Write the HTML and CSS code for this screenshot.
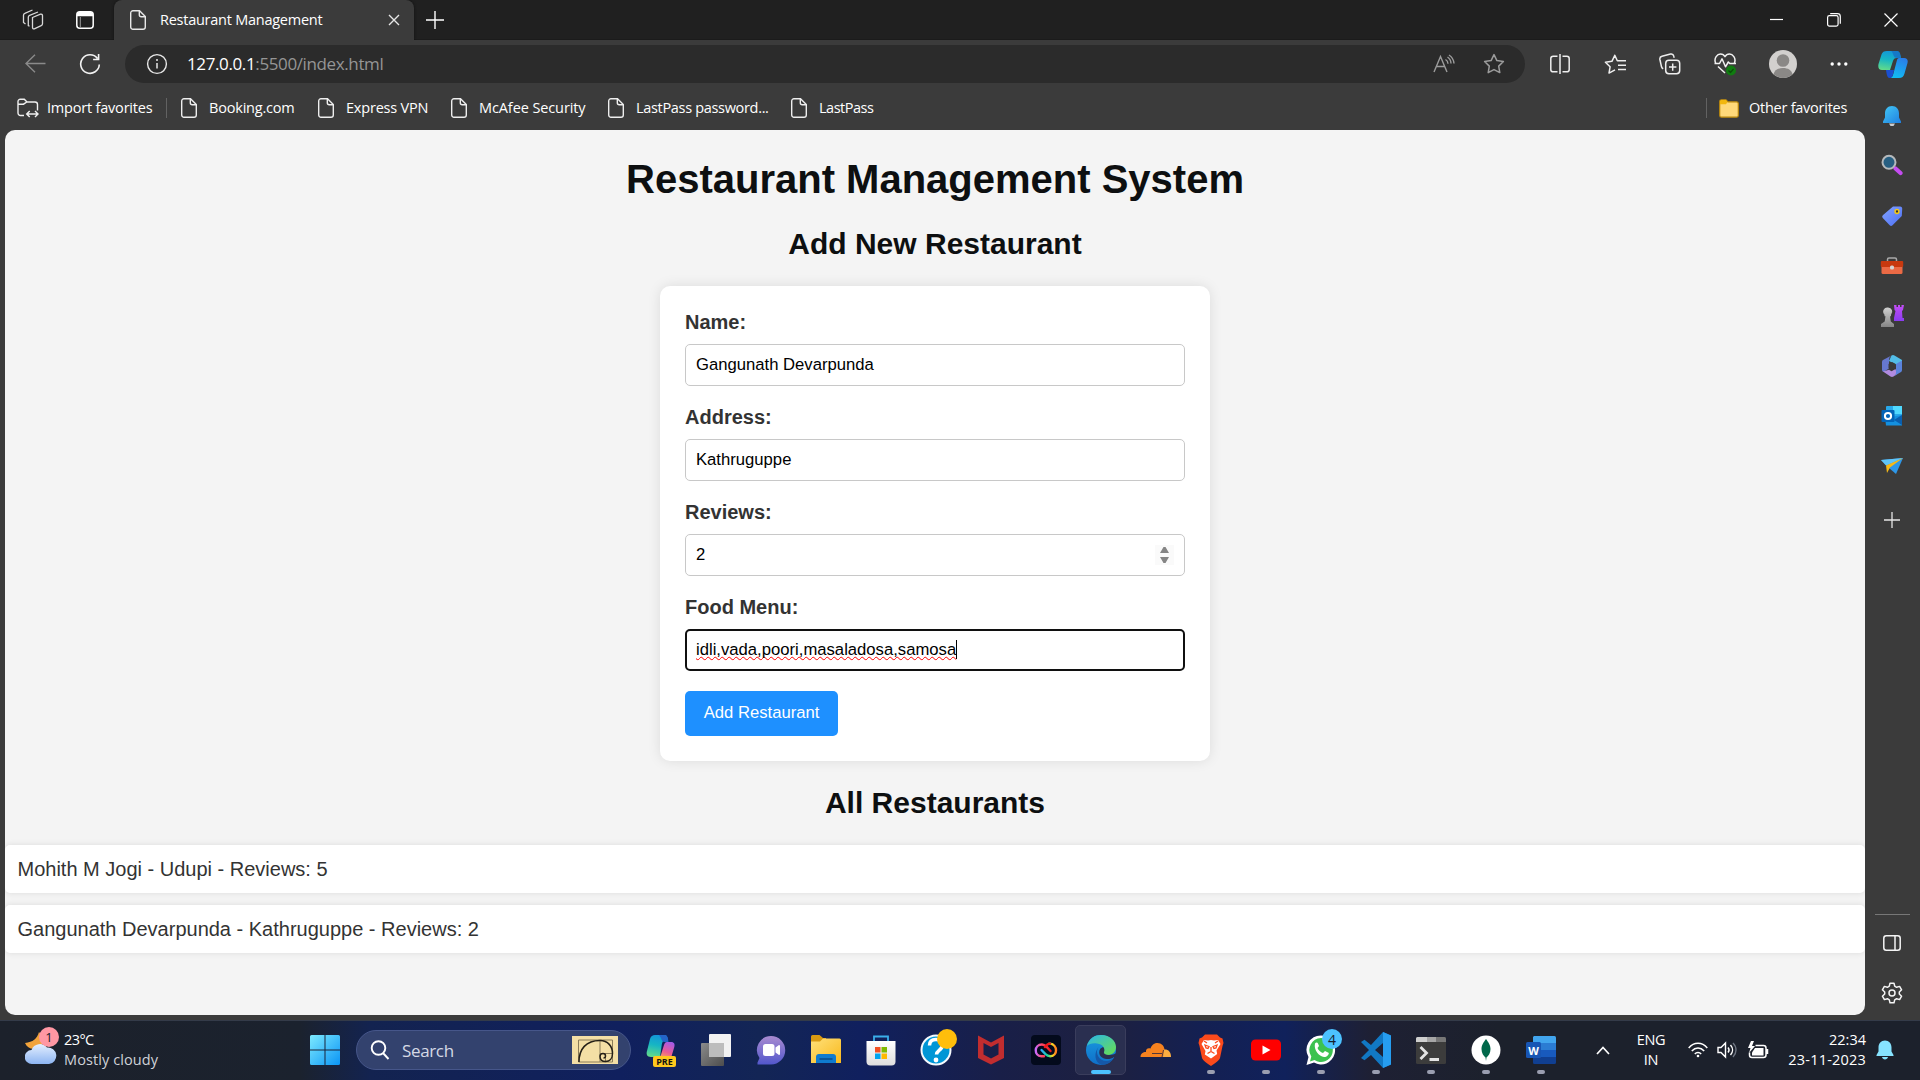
FILE: index.html
```html
<!DOCTYPE html>
<html lang="en">
<head>
<meta charset="utf-8">
<title>Restaurant Management</title>
<link rel="stylesheet" href="styles.css">
</head>
<body>
<svg class="defs" width="0" height="0">
  <defs>
    <symbol id="page" viewBox="0 0 16 20"><path d="M3 .7h6.500L15.300 6.500V17a2.300 2.300 0 0 1-2.300 2.300H3A2.300 2.300 0 0 1 .7 17V3A2.300 2.300 0 0 1 3 .7zM9.300 1v3.700a2 2 0 0 0 2 2H15" fill="none" stroke="currentColor" stroke-width="1.400"/></symbol>
    <linearGradient id="gBell" x2="1" y2="1"><stop offset="0" stop-color="#43c8f5"/><stop offset="1" stop-color="#1f7fe0"/></linearGradient>
    <linearGradient id="gTeal" x1="0.500" y1="0" x2="0.300" y2="1"><stop offset="0" stop-color="#1396d8"/><stop offset=".45" stop-color="#16b5c4"/><stop offset="1" stop-color="#62db8a"/></linearGradient>
    <linearGradient id="gBlue" x1="0.700" y1="0" x2="0.300" y2="1"><stop offset="0" stop-color="#2a7de8"/><stop offset="1" stop-color="#11bdf3"/></linearGradient>
    <linearGradient id="gPink" x1="0.700" y1="0" x2="0.300" y2="1"><stop offset="0" stop-color="#a45be8"/><stop offset=".6" stop-color="#ec5a95"/><stop offset="1" stop-color="#f7a35c"/></linearGradient>
    <linearGradient id="gTag" x2="1" y2="1"><stop offset="0" stop-color="#84a4ff"/><stop offset="1" stop-color="#4c6ff5"/></linearGradient>
    <linearGradient id="gRook" y2="1" x2="0"><stop offset="0" stop-color="#c34df5"/><stop offset="1" stop-color="#8a3df0"/></linearGradient>
    <linearGradient id="gPawn" y2="1" x2="0"><stop offset="0" stop-color="#d0d0d0"/><stop offset="1" stop-color="#858585"/></linearGradient>
    <linearGradient id="gWin" x2="1" y2="1"><stop offset="0" stop-color="#7deaff"/><stop offset="1" stop-color="#0a94f5"/></linearGradient>
    <linearGradient id="gFolder" x2="1" y2="1"><stop offset="0" stop-color="#ffe07a"/><stop offset="1" stop-color="#f9b91c"/></linearGradient>
    <linearGradient id="gChat" x2="0" y2="1"><stop offset="0" stop-color="#a98bd0"/><stop offset="1" stop-color="#5257cc"/></linearGradient>
    <linearGradient id="gEdge" x2="0" y2="1"><stop offset="0" stop-color="#1a9be0"/><stop offset="1" stop-color="#0f6fc8"/></linearGradient>
    <linearGradient id="gWave" x2="1" y2="1"><stop offset="0" stop-color="#2bb5ea"/><stop offset="1" stop-color="#6be04c"/></linearGradient>
    <linearGradient id="gCloud" x2="0" y2="1"><stop offset="0" stop-color="#e4efff"/><stop offset="1" stop-color="#8db5f2"/></linearGradient>
    <linearGradient id="gBox" x2="0" y2="1"><stop offset="0" stop-color="#fff"/><stop offset="1" stop-color="#dedede"/></linearGradient>
    <linearGradient id="gGrey" x2="1" y2="1"><stop offset="0" stop-color="#8b8b8b"/><stop offset="1" stop-color="#4d4d4d"/></linearGradient>
    <linearGradient id="gLoopA" x2="1" y2="0"><stop offset="0" stop-color="#c86bff"/><stop offset=".4" stop-color="#ff4a6a"/><stop offset="1" stop-color="#f01818"/></linearGradient>
    <linearGradient id="gLoopB" x2="1" y2="0"><stop offset="0" stop-color="#2aa8ff"/><stop offset=".45" stop-color="#20d890"/><stop offset=".75" stop-color="#ffd820"/><stop offset="1" stop-color="#ff7a20"/></linearGradient>
  </defs>
</svg>

<header class="tabstrip">
  <span class="cell workspaces"><svg width="22" height="22" viewBox="0 0 22 22" fill="none" stroke="#d8d8d8" stroke-width="1.300"><path d="M10.500 8.500l8-3.300a1.500 1.500 0 0 1 2 1.400v8.100a2 2 0 0 1-1.300 1.900l-6.900 3.200a1.300 1.300 0 0 1-1.800-1.200z"/><path d="M7.500 17.300L6.300 16.600V8.200a2 2 0 0 1 1.300-1.900l8.400-3.300M3.500 15l-2-1.500V6.200a2 2 0 0 1 1.300-1.900L10.500 1"/></svg></span>
  <span class="cell tab-actions"><svg width="18" height="18" viewBox="0 0 18 18"><rect x=".8" y=".8" width="16.400" height="16.400" rx="3" fill="none" stroke="#fff" stroke-width="1.500"/><path d="M1 5.300V3.500A2.500 2.500 0 0 1 3.500 1h11A2.500 2.500 0 0 1 17 3.500v1.800z" fill="#fff"/><path d="M4.300 6v11" stroke="#9a9a9a" stroke-width="1"/></svg></span>
  <div class="tab">
    <svg width="16" height="20"><use href="#page"/></svg>
    <span class="tab-title">Restaurant Management</span>
    <svg class="tab-close" width="12" height="12" viewBox="0 0 12 12" stroke="#e6e6e6" stroke-width="1.400"><path d="M1 1l10 10M11 1L1 11"/></svg>
  </div>
  <span class="cell new-tab"><svg width="18" height="18" viewBox="0 0 18 18" stroke="#fff" stroke-width="1.400"><path d="M9 0v18M0 9h18"/></svg></span>
  <div class="window-buttons">
    <span class="cell"><svg width="14" height="14" viewBox="0 0 14 14" stroke="#fff" stroke-width="1.200"><path d="M0 6.500h13"/></svg></span>
    <span class="cell"><svg width="14" height="14" viewBox="0 0 14 14" fill="none" stroke="#fff" stroke-width="1.200"><rect x=".6" y="2.600" width="10.500" height="10.500" rx="1.800"/><path d="M3.200.6h7.300a2.800 2.800 0 0 1 2.800 2.800v7.300"/></svg></span>
    <span class="cell"><svg width="14" height="14" viewBox="0 0 14 14" stroke="#fff" stroke-width="1.200"><path d="M.5.5l13 13M13.500.5l-13 13"/></svg></span>
  </div>
</header>

<div class="browser">
  <div class="main-column">
    <nav class="toolbar">
      <span class="cell back"><svg width="21" height="19" viewBox="0 0 21 19" fill="none" stroke="#8a8a8a" stroke-width="1.400"><path d="M20.500 9.500H1M10 .8L1 9.500l9 8.700"/></svg></span>
      <span class="cell reload"><svg width="22" height="22" viewBox="0 0 22 22" fill="none" stroke="#f2f2f2" stroke-width="1.600"><path d="M20.300 11.500A9.300 9.300 0 1 1 18.500 5.500M19.600 1v5.500h-5.500"/></svg></span>
      <div class="address">
        <span class="cell"><svg width="22" height="22" viewBox="0 0 22 22"><circle cx="11" cy="11" r="9.400" fill="none" stroke="#e8e8e8" stroke-width="1.400"/><path d="M11 10v5.500" stroke="#e8e8e8" stroke-width="1.500"/><circle cx="11" cy="7" r="1" fill="#e8e8e8"/></svg></span>
        <span class="url"><b>127.0.0.1</b>:5500/index.html</span>
        <span class="cell"><svg width="22" height="20" viewBox="0 0 22 20" fill="none" stroke="#9c9c9c" stroke-width="1.400"><path d="M1 18L7.500 2.500 14 18M3.300 12.500h8.400M12.500 5.500a5 5 0 0 1 2.500 4.300M14.500 3a8 8 0 0 1 3.500 6.500M16 1a11 11 0 0 1 5 8.500"/></svg></span>
        <span class="cell"><svg width="22" height="22" viewBox="0 0 22 22" fill="none" stroke="#9c9c9c" stroke-width="1.500" stroke-linejoin="round"><path d="M11 1.600l2.900 6 6.500.9-4.700 4.600 1.100 6.500-5.800-3-5.800 3 1.100-6.500L1.600 8.500l6.500-.9z"/></svg></span>
      </div>
      <div class="toolbar-actions">
        <span class="cell"><svg width="20" height="20" viewBox="0 0 20 20" fill="none" stroke="#eee" stroke-width="1.500"><path d="M7.500 2.200H3.200A2.400 2.400 0 0 0 .8 4.600v10.800a2.400 2.400 0 0 0 2.400 2.400h4.300M12.500 2.200h4.300a2.400 2.400 0 0 1 2.400 2.400v10.800a2.400 2.400 0 0 1-2.400 2.400h-4.300M10 0v20"/></svg></span>
        <span class="cell"><svg width="22" height="22" viewBox="0 0 22 22" fill="none" stroke="#eee" stroke-width="1.500" stroke-linejoin="round"><path d="M14.800 7.800h-1.500l-2.500-5.500-2.900 6-6.500.9 4.700 4.600-1.100 6.300 6-3.200M14.800 7.800H22M14 12.200h8M14 16.600h8"/></svg></span>
        <span class="cell"><svg width="22" height="22" viewBox="0 0 22 22" fill="none" stroke="#eee" stroke-width="1.500"><rect x="6.700" y="7.200" width="14" height="13.600" rx="3.200"/><path d="M13.700 10.500v7.200M10 14.100h7.400M4.200 15.800a3 3 0 0 1-1.700-2L.9 6.500A2.800 2.800 0 0 1 3 3.300l8.500-2.200a2.800 2.800 0 0 1 3.300 2.100l.4 1.500"/></svg></span>
        <span class="cell"><svg width="22" height="24" viewBox="0 0 22 24" fill="none" stroke="#f2f2f2" stroke-width="1.500" stroke-linejoin="round"><path d="M1.600 11C-.5 6 3.500 2 6.500 2c2.500 0 4 1.800 4.500 2.700C11.500 3.800 13 2 15.500 2c3 0 7 4 4.900 9M.5 11.500h5l2.500-4.700 3.500 8 2.800-4.800 1.500 1.500H22M4 14.500l7 6.500"/><circle cx="17" cy="18.500" r="5" fill="#107c10" stroke="none"/><path d="M14.500 18.500l2 2 3-3.500" stroke="#0a4d0a" stroke-width="1.200"/></svg></span>
        <span class="cell avatar-cell"><svg width="28" height="28" viewBox="0 0 28 28"><circle cx="14" cy="14" r="14" fill="#d2d0ce"/><circle cx="14" cy="10.500" r="6.300" fill="#8a8886"/><path d="M4.500 24.200C5.500 20 9 18 14 18s8.500 2 9.500 6.200A14 14 0 0 1 4.500 24.200z" fill="#8a8886"/></svg></span>
        <span class="cell more"><svg width="18" height="6" fill="#fff"><circle cx="2.200" cy="3" r="1.700"/><circle cx="9" cy="3" r="1.700"/><circle cx="15.800" cy="3" r="1.700"/></svg></span>
      </div>
    </nav>

    <nav class="favorites">
      <span class="fav import"><svg width="22" height="20" viewBox="0 0 22 20" fill="none" stroke="#f0f0f0" stroke-width="1.400"><path d="M7 17.500H3.500A2.500 2.500 0 0 1 1 15V3.500A2.300 2.300 0 0 1 3.300 1.200h4L10 4h8a2.500 2.500 0 0 1 2.500 2.500v6M1.200 6.200h5.300L9.800 4M10 16h11M12.700 13L9.700 16l3 3M18 13l3 3-3 3"/></svg><span>Import favorites</span></span>
      <span class="divider"></span>
      <span class="fav booking"><svg width="16" height="20"><use href="#page"/></svg><span>Booking.com</span></span>
      <span class="fav express"><svg width="16" height="20"><use href="#page"/></svg><span>Express VPN</span></span>
      <span class="fav mcafee"><svg width="16" height="20"><use href="#page"/></svg><span>McAfee Security</span></span>
      <span class="fav password"><svg width="16" height="20"><use href="#page"/></svg><span>LastPass password...</span></span>
      <span class="fav lastpass"><svg width="16" height="20"><use href="#page"/></svg><span>LastPass</span></span>
      <span class="divider other-divider"></span>
      <span class="fav other"><svg width="20" height="19" viewBox="0 0 20 19"><path d="M.7 2.500A1.700 1.700 0 0 1 2.400.8H7l2 2h8.500a1.800 1.800 0 0 1 1.800 1.800v11.800a1.800 1.800 0 0 1-1.800 1.800H2.500a1.800 1.800 0 0 1-1.800-1.800z" fill="#ffd97a" stroke="#b8860b" stroke-width="1.200"/><path d="M1 2.500A1.500 1.500 0 0 1 2.500 1H7l1.500 2L7 5.300H1z" fill="#f2b70e"/></svg><span>Other favorites</span></span>
    </nav>

    <main class="page">
      <h1>Restaurant Management System</h1>
      <h2>Add New Restaurant</h2>
      <form class="card">
        <div class="field"><label>Name:</label><div class="input">Gangunath Devarpunda</div></div>
        <div class="field"><label>Address:</label><div class="input">Kathruguppe</div></div>
        <div class="field"><label>Reviews:</label><div class="input number">2<svg width="19" height="20" viewBox="0 0 19 20"><rect width="19" height="20" fill="#fafafa"/><path d="M5 8l3.500-6h2L14 8zM5 12l3.500 6h2l3.500-6z" fill="#858585"/></svg></div></div>
        <div class="field"><label>Food Menu:</label><div class="input focused"><span class="misspelled">idli,vada,poori,masaladosa,samosa</span><span class="caret"></span></div></div>
        <button type="button">Add Restaurant</button>
      </form>
      <h2 class="list-title">All Restaurants</h2>
      <ul>
        <li>Mohith M Jogi - Udupi - Reviews: 5</li>
        <li>Gangunath Devarpunda - Kathruguppe - Reviews: 2</li>
      </ul>
    </main>
  </div>

  <aside class="sidebar">
    <span class="copilot"><svg width="30" height="28" viewBox="0 0 30 28"><path d="M9 1h9c2.500 0 3.300 1.500 4 4l1 3h-4c-2.500 0-3.500 1-4.200 3.500L12 20H4C.8 20-.2 17.500.5 14L3.500 4.500C4.300 2 6 1 9 1z" fill="url(#gTeal)"/><path d="M13 1h6c2 0 3 1.500 3.500 4l.5 3h-4c-2 0-3-1-3.800-3.500C14.600 2.500 14 1.500 13 1z" fill="#1578c7"/><path d="M21 8h5c3.200 0 4.200 2 3.500 5l-3 10.500C25.700 26.500 24 28 21 28h-9c2-.5 2.700-1.500 3.300-4L19 10c.4-1.300 1-2 2-2z" fill="url(#gBlue)"/><path d="M8 20h8l-1 4.500c-.6 2.500-2 3.500-3.500 3.500C9 28 8.500 23 8 20z" fill="#1a4fd0"/></svg></span>
    <span><svg width="20" height="22" viewBox="0 0 20 22"><path d="M7 18.500h6L11.500 21h-3z" fill="#c9ccd0"/><path d="M10 1C5.500 1 3 4.300 3 8.500v4L1 16.500V18h18v-1.500l-2-4v-4C17 4.300 14.500 1 10 1z" fill="url(#gBell)"/></svg></span>
    <span class="raised"><svg width="22" height="22" viewBox="0 0 22 22"><path d="M14.500 14.500l5 4.500" stroke="#c44cf0" stroke-width="4.200" stroke-linecap="round"/><circle cx="8" cy="8.300" r="6.500" fill="#275f82" stroke="#b5b9bc" stroke-width="2"/></svg></span>
    <span class="lifted"><svg width="22" height="22" viewBox="0 0 22 22"><path d="M12 1.500h7A2.300 2.300 0 0 1 21.200 4l-.4 7-9.300 9.200a2 2 0 0 1-2.800 0L1.800 13a2 2 0 0 1 0-2.800z" fill="url(#gTag)"/><circle cx="16" cy="6.500" r="1.900" fill="#333" stroke="#f4c716" stroke-width="1.500"/></svg></span>
    <span><svg width="24" height="20" viewBox="0 0 24 20"><path d="M7.500 5V3.500A1.500 1.500 0 0 1 9 2h6a1.500 1.500 0 0 1 1.500 1.500V5" fill="none" stroke="#a9a9a9" stroke-width="1.500"/><rect x="1.500" y="7" width="21" height="11" rx="1.500" fill="#eb6a45"/><rect x=".8" y="5" width="22.400" height="6" rx="1" fill="#c8390f"/><rect x="10" y="9.500" width="4" height="4" rx="1.500" fill="#d4d4d4"/></svg></span>
    <span class="lifted"><svg width="24" height="24" viewBox="0 0 24 24"><path d="M14 1h2.500v2H18V1h2v2h1.500V1H24l-1 5-1 1 .5 7H24v3h-10v-3l1.500-7-1-1z" fill="url(#gRook)"/><path d="M8 3.500a4.200 4.200 0 0 1 3 7.200v1.500h-1l.8 5.300 3.200 2.500v3H1v-3l3.700-2.500.8-5.300h-1v-1.500A4.200 4.200 0 0 1 8 3.500z" fill="url(#gPawn)"/></svg></span>
    <span class="lifted"><svg width="22" height="24" viewBox="0 0 22 24"><path d="M10.500 1.500q1.500-.8 3 0L21 6v7l-6-2.500L8 7z" fill="#52bde8"/><path d="M10.500 1.500L2 6Q1 6.700 1 8v8q0 1.500 1.500 2L8 14.500V5.500q0-2.500 2.500-4z" fill="#6678cf"/><path d="M2 17.500L9.500 22.500q1.500.8 3 0L16 20l-1.500-5-4 2.300-2.500-1.500z" fill="#b18be0"/><path d="M21 6.500V16q0 1.300-1 2l-7.500 4.500q3-2 2.500-5V10z" fill="#5b83dc"/><path d="M11 8l3.700 2v4.300L11 16.500l-3.500-2.200V10z" fill="#3b3b3b"/></svg></span>
    <span><svg width="22" height="20" viewBox="0 0 22 20"><rect x="5" y="0" width="16" height="17" rx="1" fill="#28a8ea"/><path d="M12 0h9v8h-9z" fill="#50d9ff"/><path d="M4 12l17-3v10.500H5z" fill="#1490df"/><path d="M13 14l8-5v10z" fill="#0a5eae"/><rect x=".5" y="4" width="13" height="12" rx="1" fill="#0364b8"/><circle cx="7" cy="10" r="3.100" fill="none" stroke="#fff" stroke-width="2"/></svg></span>
    <span><svg width="22" height="18" viewBox="0 0 22 18"><path d="M0 3l22-2-7 16-7-6z" fill="#2e97e8"/><path d="M0 3l22-2L5 8.500z" fill="#60c5f8"/><path d="M5 8.500L22 1 9 10.500 6 16z" fill="#f7b916"/></svg></span>
    <span class="add"><svg width="16" height="16" viewBox="0 0 16 16" stroke="#e6e6e6" stroke-width="1.300"><path d="M8 0v16M0 8h16"/></svg></span>
    <i class="rule"></i>
    <span class="lifted"><svg width="18" height="16" viewBox="0 0 18 16" fill="none" stroke="#f5f5f5" stroke-width="1.500"><rect x=".8" y=".8" width="16.400" height="14.400" rx="2.500"/><path d="M12 1v14"/></svg></span>
    <span class="lifted"><svg width="22" height="22" viewBox="0 0 22 22" fill="none" stroke="#f5f5f5" stroke-width="1.500" stroke-linejoin="round"><path d="M9 1.200h4l.7 3 1.900 1.100 3-.9 2 3.400-2.300 2.200v2l2.300 2.200-2 3.400-3-.9-1.900 1.100-.7 3H9l-.7-3-1.900-1.100-3 .9-2-3.400L3.700 12v-2L1.400 7.800l2-3.400 3 .9 1.900-1.100z"/><circle cx="11" cy="11" r="3"/></svg></span>
  </aside>
</div>

<footer class="taskbar">
  <div class="weather">
    <svg width="32" height="38" viewBox="0 0 32 38"><path d="M14 5c-2 7-6 10-14 11 2 5 7 7 13 5 6-3 7-10 1-16z" fill="#f2a33a"/><path d="M7 37a7 7 0 0 1-.5-14A9 9 0 0 1 22 20.500a8.300 8.300 0 0 1 2 16.500z" fill="url(#gCloud)"/></svg>
    <span class="badge pink">1</span>
    <div class="weather-text"><span class="temp">23°C</span><span class="sky">Mostly cloudy</span></div>
  </div>
  <svg class="start" width="30" height="30" viewBox="0 0 30 30" fill="url(#gWin)"><path d="M0 1.500A1.500 1.500 0 0 1 1.500 0h13v14.500H0zM15.500 0h13A1.500 1.500 0 0 1 30 1.500v13H15.500zM0 15.500h14.500V30h-13A1.500 1.500 0 0 1 0 28.500zM15.500 15.500H30v13a1.500 1.500 0 0 1-1.500 1.500h-13z"/></svg>
  <div class="search">
    <svg width="20" height="20" viewBox="0 0 20 20" fill="none" stroke="#fff" stroke-width="1.900"><circle cx="8.500" cy="8" r="6.800"/><path d="M13 13l5.500 6"/></svg>
    <span>Search</span>
    <svg class="spiral" width="46" height="28" viewBox="0 0 46 28" fill="none"><rect width="46" height="28" fill="#f4dfa5"/><path d="M6.500 4h34v22h-34zM28 4v22M28 17.500h12.500M33.500 17.500V26" stroke="#8b7c58" stroke-width="1"/><path d="M7 26C7 13 14 4.500 28 4.500c8 0 12.500 6 12.500 13 0 5-3 8-7 8-3.500 0-5.500-2-5.500-5 0-2 1.300-3 3-3s2.500 1 2.500 2.500-1 2-2 2" stroke="#252017" stroke-width="1.500"/></svg>
  </div>
  <div class="apps">
    <span class="app"><svg width="30" height="34" viewBox="0 0 30 34"><path d="M9 2h9c3 0 3.300 2 4 5h-2c-3 0-3.500 2-4.200 4.500L14 24H5C1 24 0 21 1 18L4 6c1-3 2.500-4 5-4z" fill="url(#gTeal)"/><path d="M13 2h6c2 0 3 2 3.500 7h-4c-2 0-3-2-3.500-4z" fill="#2464c8"/><path d="M21 9h4c3.500 0 4 2.500 3.300 5L25 25H12c2-1 3-2.500 3.500-5L18 12c.7-2 1.500-3 3-3z" fill="url(#gPink)"/><rect x="7" y="23" width="23" height="11" rx="2" fill="#ffc81e"/><text x="18.500" y="32" text-anchor="middle" class="pre">PRE</text></svg></span>
    <span class="app"><svg width="32" height="34" viewBox="0 0 32 34"><rect x="1" y="10" width="23" height="23" rx="1" fill="url(#gGrey)"/><rect x="9" y="1" width="22" height="23" rx="1" fill="#f2f2f2"/><path d="M9 10h15v14H9z" fill="#bdbdbd"/></svg></span>
    <span class="app"><svg width="30" height="34" viewBox="0 0 30 34"><path d="M15 3A14 14 0 0 1 15 31.500H1.500V29.500l2-4.500A14 14 0 0 1 15 3z" fill="url(#gChat)"/><rect x="7" y="11" width="11.500" height="12" rx="2.500" fill="#fff"/><path d="M19.500 14.500L23 12q1 0 1 1v8q0 1-1 1l-3.500-2.500z" fill="#fff"/></svg></span>
    <span class="app"><svg width="30" height="30" viewBox="0 0 30 30"><path d="M0 1.500A1.500 1.500 0 0 1 1.500 0h7L12 3h3v10H0z" fill="#d99a12"/><path d="M0 6.500h9l3-3h16.500A1.500 1.500 0 0 1 30 5v23H0z" fill="url(#gFolder)"/><path d="M5 28v-6a3 3 0 0 1 3-3h14a3 3 0 0 1 3 3v6z" fill="#0f7bd0"/><path d="M9 24h12" stroke="#074b8c" stroke-width="1.500" stroke-linecap="round"/></svg></span>
    <span class="app"><svg width="30" height="32" viewBox="0 0 30 32"><path d="M8 9V2.500h14V9" fill="none" stroke="#3aaeea" stroke-width="1.800"/><path d="M.5 7h29v20.500a4 4 0 0 1-4 4h-21a4 4 0 0 1-4-4z" fill="url(#gBox)"/><path d="M9 13h5.500v5.500H9z" fill="#f25022"/><path d="M15.500 13H21v5.500h-5.500z" fill="#7fba00"/><path d="M9 19.500h5.500V25H9z" fill="#00a4ef"/><path d="M15.500 19.500H21V25h-5.500z" fill="#ffb900"/></svg></span>
    <span class="app"><svg width="32" height="32" viewBox="0 0 32 32"><circle cx="16" cy="16" r="14.500" fill="#0096d6" stroke="#f5f9fc" stroke-width="2"/><path d="M9.500 11.500C9.500 7.500 12 5.500 16 5.500s6.500 2 6.500 5.500c0 5-6 5-6 9.500" fill="none" stroke="#fff" stroke-width="3.500"/><circle cx="16" cy="26" r="2.400" fill="#fff"/></svg><span class="badge amber"></span></span>
    <span class="app"><svg width="28" height="32" viewBox="0 0 28 32"><path d="M1 1.500l13 7 13-7V24l-13 6.500L1 24zM6.500 9v11.500l7.500 4 7.500-4V9L14 13z" fill="#c12d2f" fill-rule="evenodd"/></svg></span>
    <span class="app"><svg width="30" height="30" viewBox="0 0 30 30" fill="none" stroke-width="2.400" stroke-linecap="round"><rect width="30" height="30" rx="4" fill="#030a1c"/><path d="M13 21.300h-2.500C2.500 20.500 3 9.500 11 9.500c2 0 3.300 1 4.500 2.200l4 4.300" stroke="url(#gLoopA)"/><path d="M10.500 15l4 4.200c1.500 1.500 3 2.100 4.800 2.100C27 21 27 9.500 19 8.600h-1" stroke="url(#gLoopB)"/><path d="M14 12c1.500-2.200 3-3.300 5-3.400" stroke="#f01818"/></svg></span>
    <span class="app active"><svg width="30" height="32" viewBox="0 0 30 32"><circle cx="15" cy="16" r="15" fill="url(#gEdge)"/><path d="M1 12C3 4 9 1 15 1c9 0 15 6 15 12 0 5-4 8-8 8-3 0-5-1-4.500-3C19 15 18 10.500 11 9.500 6 9 3 10 1 12z" fill="url(#gWave)"/><path d="M12.500 13c-4 6 .5 14 8 14 3 0 6-1.500 7.500-3.500-2 4.500-7 7.500-12 7.500C8 29 8 18 12.500 13z" fill="#1558a8"/><path d="M14.500 14.500c-3 4-.5 10 6 10.500 3 .2 5.500-.5 7.500-2l1 .5-1.500 2.500 3-2v-5c-2 1.500-5 2.300-8 2-3-.2-5-1-4.500-3 .8-2 .3-4-1-5z" fill="#2a2f50"/></svg></span>
    <span class="app"><svg width="32" height="18" viewBox="0 0 32 18"><path d="M.5 16C.5 12.500 3 11 6 11c-.5-3 2-4.500 4.500-3.500C12 3.500 14.500 2 17.500 2c4 0 7 3 7 7l-1 7z" fill="#f6821f"/><path d="M24 8.500c4-.5 7 2 7 7.500h-8z" fill="#fbad41"/><path d="M12 12.500h10M23.500 9l-1.500 7" stroke="#2a2440" stroke-width=".8"/></svg></span>
    <span class="app open"><svg width="26" height="32" viewBox="0 0 26 32"><path d="M7 .5h12l3 3 2.500 1L25.500 9l-1 3-2.500 12c-1 3-5 5-9 8-4-3-8-5-9-8L1.500 12l-1-3 1-4.500L4 3.500z" fill="#fb4a1c"/><path d="M6 6l4 .5L13 6l3 .5 4-.5 2.500 4-4 6.500.7 3.500-6.200 4.500L6.800 20.500l.7-3.500-4-7z" fill="#fff"/><path d="M7 11l4 1.500-1 2-2-.5zM19 11l-4 1.500 1 2 2-.5zM13 13v5M9.500 19.500l3.500-2 3.500 2M6 7l3 2M20 7l-3 2" stroke="#fb4a1c" stroke-width="1.300" fill="none"/></svg></span>
    <span class="app open"><svg width="30" height="22" viewBox="0 0 30 22"><rect y=".5" width="30" height="21" rx="4.500" fill="#f00"/><path d="M11.500 6.500l8 4.500-8 4.500z" fill="#fff"/></svg></span>
    <span class="app open"><svg width="30" height="32" viewBox="0 0 30 32"><path d="M15 1.500A14 14.500 0 1 1 8 28.500L.5 31l2-8A14.300 14.300 0 0 1 15 1.500z" fill="#fff"/><path d="M15 4A11.800 12 0 1 1 8.500 26L4 27.500l1.300-5A12 12 0 0 1 15 4z" fill="#3cc250"/><path d="M9 9.500c1-1.500 2.500-1.300 3 0l1 2.500-1.500 2c1 2.500 3 4 5.500 5l2-2 3.500 1.700c1 .5-.5 4.300-4.500 4.300C13 22.500 7.500 16 9 9.500z" fill="#fff"/></svg><span class="badge cyan">4</span></span>
    <span class="app open"><svg width="30" height="36" viewBox="0 0 30 36"><path d="M22 0l8 3.500v29L22 36 10 23l-6.500 5.200L0 26l8-8-8-8 3.500-2.200L10 13zM22 11l-8 7 8 7z" fill="#1178c4" fill-rule="evenodd"/><path d="M22 0l8 3.500v29L22 36z" fill="#269df0"/></svg></span>
    <span class="app open"><svg width="30" height="27" viewBox="0 0 30 27"><rect width="30" height="27" rx="1.500" fill="#3c3c3c"/><path d="M0 5V1.500A1.500 1.500 0 0 1 1.500 0H11v5z" fill="#cfcfcf"/><path d="M11 0h9v5h-9z" fill="#a6a6a6"/><path d="M20 0h8.500A1.500 1.500 0 0 1 30 1.500V5H20z" fill="#777"/><path d="M4.500 10l6 6-6 6M13.500 22.500H23" fill="none" stroke="#e3e3e3" stroke-width="2.800"/></svg></span>
    <span class="app open"><svg width="30" height="30" viewBox="0 0 30 30"><circle cx="15" cy="15" r="14.500" fill="#fff"/><path d="M15 4c2 3 4.500 5.500 4.500 10 0 4-2 7-4 8.500L15 26l-.5-3.500c-2-1.500-4-4.500-4-8.500C10.500 9.500 13 7 15 4z" fill="#00684a"/></svg></span>
    <span class="app open"><svg width="30" height="28" viewBox="0 0 30 28"><path d="M8 0h20.500A1.500 1.500 0 0 1 30 1.500V7H7V1z" fill="#41a5ee"/><path d="M7 7h23v7H7z" fill="#2b7cd3"/><path d="M7 14h23v7H7z" fill="#185abd"/><path d="M7 21h23v5.500a1.500 1.500 0 0 1-1.500 1.500H8.500A1.500 1.500 0 0 1 7 26.500z" fill="#103f91"/><rect y="6" width="15" height="16" rx="1.500" fill="#1856b4"/><text x="7.500" y="18.500" text-anchor="middle" class="word">W</text></svg></span>
  </div>
  <div class="tray">
    <svg class="chevron" width="14" height="9" viewBox="0 0 14 9" fill="none" stroke="#fff" stroke-width="1.700"><path d="M1 8l6-6.500L13 8"/></svg>
    <div class="lang"><span>ENG</span><span>IN</span></div>
    <svg class="wifi" width="20" height="16" viewBox="0 0 20 16" fill="none" stroke="#fff" stroke-width="1.500"><path d="M.7 6C6-.2 14-.2 19.300 6M3.800 9c3.600-4 8.800-4 12.400 0M6.800 12c1.800-2 4.600-2 6.400 0"/><circle cx="10" cy="14" r="1.300" fill="#fff" stroke="none"/></svg>
    <svg class="volume" width="20" height="18" viewBox="0 0 20 18" fill="none" stroke="#fff" stroke-width="1.400"><path d="M1 6.500h3L8.500 2v14L4 11.500H1zM11 6.500c1.300 1.500 1.300 3.500 0 5M13.500 4c2.700 3 2.700 7 0 10"/><path d="M16 2c4 4 4 10 0 14" stroke="#6d7480"/></svg>
    <svg class="battery" width="22" height="18" viewBox="0 0 22 18" fill="none" stroke="#fff" stroke-width="1.500"><path d="M8.500 4.500h8a2.500 2.500 0 0 1 2.500 2.500v7a2.500 2.500 0 0 1-2.500 2.500H5A2.500 2.500 0 0 1 2.500 14v-2.500M20.500 8v5"/><path d="M8 7h8.500v7.500H5v-3z" fill="#fff" stroke="none"/><path d="M4 0L1 7h2.500L2 12l6-7H5l2-5z" fill="#fff" stroke="none"/></svg>
    <div class="clock"><span>22:34</span><span class="date">23-11-2023</span></div>
    <svg class="bell" width="18" height="20" viewBox="0 0 18 20" fill="#86e3ff"><path d="M9 .5c-4 0-6.500 3-6.500 7v4L.5 15v1h17v-1l-2-3.500v-4c0-4-2.500-7-6.500-7zM6 17h6c-.5 3.300-5.500 3.300-6 0z"/></svg>
  </div>
</footer>
</body>
</html>
```
FILE: styles.css
```css
* { box-sizing: border-box; }
body {
  margin: 0;
  width: 1920px;
  height: 1080px;
  overflow: hidden;
  background: #3b3b3b;
  color: #fff;
  font-family: "Open Sans", "Noto Sans", sans-serif;
  display: flex;
  flex-direction: column;
}
svg { display: block; flex: none; }
.defs { position: absolute; }
.cell { display: flex; align-items: center; justify-content: center; flex: none; }

/* tab strip */
.tabstrip { display: flex; height: 40px; background: #202020; flex: none; border-bottom: 1px solid #1b1b1b; }
.workspaces { width: 65px; }
.tab-actions { width: 40px; margin-right: 9px; }
.tab {
  display: flex;
  align-items: center;
  width: 300px;
  height: 40px;
  padding: 0 14px 0 16px;
  background: #3b3b3b;
  border-radius: 8px 8px 0 0;
  box-shadow: 0 0 3px #111;
  clip-path: inset(0 -4px 0 -4px);
}
.tab svg { color: #e8e8e8; }
.tab-title { margin-left: 14px; padding-bottom: 1px; font-size: 14.500px; letter-spacing: -.25px; white-space: nowrap; }
.tab-close { margin-left: auto; }
.new-tab { width: 42px; }
.window-buttons { display: flex; margin-left: auto; }
.window-buttons .cell { width: 57px; }
.window-buttons .cell:last-child { width: 58px; }

/* browser frame */
.browser { display: flex; height: 980px; flex: none; }
.main-column { display: flex; flex-direction: column; width: 1865px; }
.toolbar { display: flex; height: 46px; padding-top: 1px; align-items: center; flex: none; }
.back { width: 70px; }
.reload { width: 40px; margin-right: 15px; }
.address {
  display: flex;
  align-items: center;
  width: 1400px;
  height: 38px;
  padding: 0 6px 0 7px;
  border-radius: 19px;
  background: #2b2b2b;
  flex: none;
}
.address .cell { width: 50px; }
.url { flex: 1; padding: 0 0 1px 5px; color: #959595; font-size: 17px; letter-spacing: -.38px; }
.url b { color: #fff; font-weight: 400; }
.toolbar-actions { display: flex; padding-left: 7px; }
.toolbar-actions .cell { width: 55px; height: 38px; }
.toolbar-actions .avatar-cell { width: 61px; }
.toolbar-actions .more { width: 52px; }

.favorites { display: flex; align-items: center; height: 44px; padding-left: 17px; flex: none; font-size: 14.500px; letter-spacing: -.2px; white-space: nowrap; }
.fav { display: flex; align-items: center; gap: 12px; flex: none; }
.fav svg { color: #eee; }
.fav span { padding-bottom: 2px; }
.import { width: 149px; gap: 8px; }
.divider { width: 1px; height: 20px; background: #626262; }
.booking { width: 137px; margin-left: 14px; }
.express { width: 133px; }
.mcafee { width: 157px; letter-spacing: -.1px; }
.password { width: 183px; letter-spacing: -.32px; }
.lastpass { letter-spacing: -.5px; }
.other-divider { margin-left: auto; }
.other { width: 146px; margin-left: 12px; gap: 10px; letter-spacing: -.25px; }

/* web page */
.page {
  width: 1860px;
  height: 885px;
  margin-left: 5px;
  overflow: hidden;
  border-radius: 10px;
  background: #f4f4f4;
  color: #333;
  font-family: "Liberation Sans", Arial, sans-serif;
  font-size: 20px;
}
.page h1, .page h2 { margin: 0; color: #0d0f10; text-align: center; }
.page h1 { margin-top: 26px; font-size: 40px; line-height: 46px; }
.page h2 { margin-top: 24px; font-size: 30px; line-height: 35px; }
.card {
  width: 550px;
  height: 475px;
  margin: 25px auto 0;
  padding: 25px;
  border-radius: 10px;
  background: #fff;
  box-shadow: 0 0 13px rgba(0, 0, 0, .1);
}
.field { height: 95px; }
.field label { display: block; height: 33px; line-height: 23px; font-weight: 700; }
.input {
  display: flex;
  align-items: center;
  height: 42px;
  padding: 0 10px 2px;
  border: 1px solid #c8c8c8;
  border-radius: 5px;
  color: #000;
  font-size: 16.670px;
  line-height: 19px;
}
.number { justify-content: space-between; }
.number svg { margin-top: 2px; }
.focused { border: 2px solid #101010; padding: 0 9px 2px; }
.misspelled { text-decoration: underline wavy #f00 1.250px; text-decoration-skip-ink: none; text-underline-offset: 1px; }
.caret { width: 1px; height: 19px; background: #000; }
.card button {
  display: block;
  width: 153px;
  height: 45px;
  padding: 0 0 1px;
  border: 0;
  border-radius: 5px;
  background: #1e90ff;
  color: #fff;
  font: 16.670px "Liberation Sans", Arial, sans-serif;
}
.page .list-title { margin-top: 24px; }
.page ul { margin: 25px 0 0; padding: 0; list-style: none; }
.page li {
  height: 48px;
  margin-bottom: 12px;
  padding: 12px 12.500px;
  border-radius: 5px;
  background: #fff;
  line-height: 24px;
  box-shadow: 0 0 6px rgba(0, 0, 0, .1);
}

/* edge sidebar */
.sidebar { display: flex; flex-direction: column; align-items: center; width: 55px; padding: 0 1px 2px 0; }
.sidebar span { display: flex; align-items: center; justify-content: center; height: 50px; flex: none; }
.sidebar .copilot { height: 48px; margin-bottom: 3px; padding-left: 1px; }
.sidebar .raised { padding-bottom: 3px; }
.sidebar .lifted { padding-bottom: 1px; }
.sidebar .add { margin-top: 4px; }
.rule { width: 35px; height: 1px; margin: auto 0 3px; background: #777; }

/* taskbar */
.taskbar {
  display: flex;
  align-items: center;
  height: 60px;
  padding-bottom: 1px;
  flex: none;
  border-top: 1px solid #343b49;
  background: linear-gradient(90deg, #1c212b 0, #1b222e 300px, #132350 370px, #10205e 620px, #132555 760px, #10205e 860px, #191f48 1000px, #1d2040 1110px, #142052 1200px, #10215b 1285px, #1e2034 1370px, #1c212c 1500px);
}
.weather { position: relative; display: flex; align-items: center; width: 310px; padding-left: 25px; }
.weather > svg { margin-top: -9px; }
.weather-text { display: flex; flex-direction: column; margin-left: 7px; font-size: 14.500px; line-height: 20px; }
.temp { letter-spacing: -.6px; }
.sky { color: #cfd2d8; letter-spacing: .1px; }
.badge { position: absolute; display: flex; align-items: center; justify-content: center; width: 20px; height: 20px; border-radius: 50%; color: #16202b; font-size: 13px; }
.pink { left: 39px; top: -3px; background: #ff97a3; }
.search {
  display: flex;
  align-items: center;
  width: 275px;
  height: 40px;
  margin-left: 16px;
  padding: 0 12px 0 13px;
  border: 1px solid #46568a;
  border-radius: 20px;
  background: #33426e;
  color: #d5d9e5;
  font-size: 17px;
}
.search span { margin-left: 12px; letter-spacing: -.35px; }
.spiral { margin-left: auto; }
.apps { display: flex; margin-left: 2px; }
.app { position: relative; display: flex; align-items: center; justify-content: center; width: 55px; height: 50px; }
.active::before { content: ""; position: absolute; inset: 0 2px; border: 1px solid #3a3d5c; border-radius: 5px; background: #2a2f50; }
.active svg { position: relative; }
.open::after, .active::after { content: ""; position: absolute; left: 23.500px; bottom: 1px; width: 8px; height: 4px; border-radius: 2px; background: #9a9eb0; }
.active::after { left: 17.500px; width: 20px; background: #4cc2ff; }
.amber { left: 29px; top: 4px; background: #ffbe0b; }
.cyan { left: 29px; top: 4px; background: #4cc2ff; font-size: 14px; }
.pre { font: 700 9px "Open Sans", sans-serif; fill: #111; }
.word { font: 700 11px "Open Sans", sans-serif; fill: #fff; }
.tray { display: flex; align-items: center; flex: 1; font-size: 14.500px; }
.chevron { margin-left: 28px; }
.lang { display: flex; flex-direction: column; align-items: center; width: 40px; margin-left: 21px; letter-spacing: -.3px; }
.lang, .clock { line-height: 20px; }
.wifi { margin-left: 17px; }
.volume { margin-left: 9px; }
.battery { margin-left: 10px; }
.clock { display: flex; flex-direction: column; align-items: flex-end; width: 97px; }
.date { letter-spacing: .2px; }
.bell { margin-left: 10px; }
```
